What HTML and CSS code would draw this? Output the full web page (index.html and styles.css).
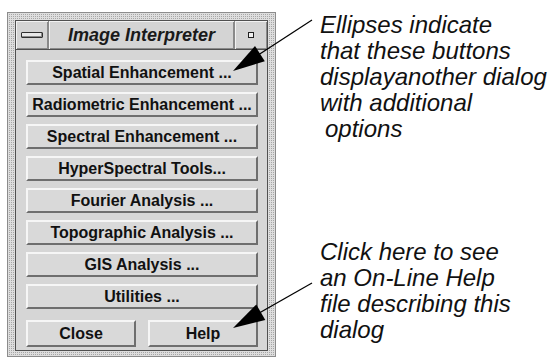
FILE: index.html
```html
<!DOCTYPE html>
<html lang="en">
<head>
    <meta charset="UTF-8">
    <meta name="viewport" content="width=device-width, initial-scale=1.0">
    <title>Image Interpreter</title>
    <link rel="stylesheet" href="styles.css">
</head>
<body>
    <div class="page">
        <div class="window">
            <div class="titlebar">
                <div class="tb-btn"><span class="icon-min"></span></div>
                <div class="tb-title">Image Interpreter</div>
                <div class="tb-btn"><span class="icon-max"></span></div>
            </div>
            <div class="content">
                <button class="btn">Spatial Enhancement ...</button>
                <button class="btn">Radiometric Enhancement ...</button>
                <button class="btn">Spectral Enhancement ...</button>
                <button class="btn">HyperSpectral Tools...</button>
                <button class="btn">Fourier Analysis ...</button>
                <button class="btn">Topographic Analysis ...</button>
                <button class="btn">GIS Analysis ...</button>
                <button class="btn">Utilities ...</button>
                <div class="bottom-row">
                    <button class="btn btn-small">Close</button>
                    <button class="btn btn-small">Help</button>
                </div>
            </div>
        </div>

        <div class="notes">
            <p class="note">Ellipses indicate<br>that these buttons<br>displayanother dialog<br>with additional<br><span class="indent">options</span></p>
            <p class="note note-help">Click here to see<br>an On-Line Help<br>file describing this<br>dialog</p>
        </div>

        <svg class="arrows" width="551" height="359" viewBox="0 0 551 359">
            <line x1="312" y1="20" x2="252" y2="59" stroke="#000" stroke-width="1.2"/>
            <polygon points="233,71 255,46 264.8,61.2" fill="#000"/>
            <line x1="312" y1="283" x2="254" y2="316" stroke="#000" stroke-width="1.2"/>
            <polygon points="233,328 256.3,304.4 265.3,320" fill="#000"/>
        </svg>
    </div>
</body>
</html>
```

FILE: styles.css
```css
body {
    margin: 0;
    background-color: #ffffff;
    font-family: "Liberation Sans", Arial, sans-serif;
    color: #111;
}
.page {
    position: relative;
    display: flex;
    align-items: flex-start;
    width: 551px;
    height: 359px;
    overflow: hidden;
}
.window {
    box-sizing: border-box;
    width: 269px;
    margin: 12px 0 0 7px;
    padding: 7px 7px 5px 7px;
    border: 1px solid #8c8c8c;
    background: conic-gradient(from 90deg at 1px 1px, #a6a6a6 90deg, #dedede 0) 0 0 / 2px 2px;
}
.titlebar {
    display: flex;
    height: 30px;
    box-sizing: border-box;
    border: 1px solid #505050;
    background-color: #d4d4d4;
}
.tb-btn {
    width: 32px;
    display: flex;
    align-items: center;
    justify-content: center;
    box-shadow: inset 1px 1px 0 #f2f2f2, inset -1px -1px 0 #8a8a8a;
}
.tb-title {
    flex: 1;
    display: flex;
    align-items: center;
    justify-content: center;
    font-size: 18px;
    font-weight: bold;
    font-style: italic;
    color: #1a1a1a;
    border-left: 1px solid #8a8a8a;
    border-right: 1px solid #8a8a8a;
    box-shadow: inset 1px 1px 0 #f2f2f2, inset -1px -1px 0 #8a8a8a;
}
.icon-min {
    width: 20px;
    height: 4px;
    border: 1px solid #303030;
    border-radius: 1px;
    background-color: #e8e8e8;
    box-shadow: inset -1px -1px 0 #8a8a8a;
}
.icon-max {
    width: 4px;
    height: 4px;
    border: 1px solid #202020;
    background-color: #f0f0f0;
}
.content {
    display: flex;
    flex-direction: column;
    gap: 7px;
    padding: 10px 9px 3px 10px;
    border: 1px solid #505050;
    border-top: none;
    background-color: #d6d6d6;
}
.btn {
    box-sizing: border-box;
    height: 25px;
    margin: 0;
    padding: 0;
    font-family: "Liberation Sans", Arial, sans-serif;
    font-size: 16px;
    font-weight: bold;
    line-height: 21px;
    color: #111;
    text-align: center;
    background-color: #d9d9d9;
    border-top: 2px solid #f6f6f6;
    border-left: 2px solid #f6f6f6;
    border-bottom: 2px solid #6e6e6e;
    border-right: 2px solid #6e6e6e;
}
.bottom-row {
    display: flex;
    justify-content: space-between;
    margin-top: 4px;
}
.btn-small {
    width: 110px;
    height: 27px;
}
.notes {
    margin-left: 44px;
}
.note {
    margin: 12px 0 0 0;
    font-size: 24px;
    font-style: italic;
    line-height: 26px;
    white-space: nowrap;
}
.note-help {
    margin-top: 97px;
}
.indent {
    padding-left: 5px;
}
.arrows {
    position: absolute;
    left: 0;
    top: 0;
    pointer-events: none;
}
```
